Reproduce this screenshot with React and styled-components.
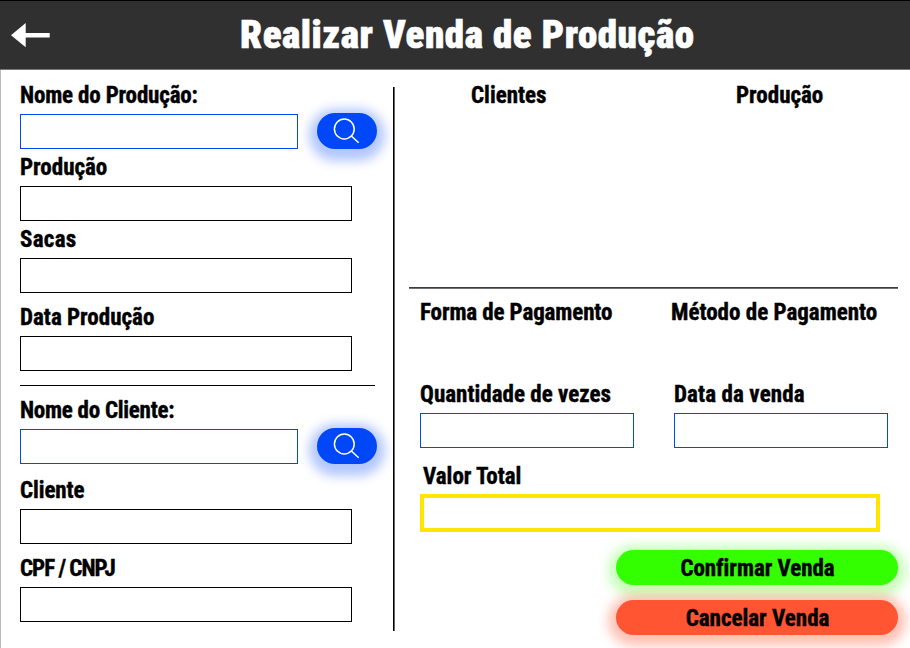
import React from 'react';
import styled, { createGlobalStyle } from 'styled-components';

const GlobalStyle = createGlobalStyle`
  *, *::before, *::after { box-sizing: border-box; }
  body { margin: 0; background: #fff; overflow: hidden; }
`;

const Screen = styled.div`
  width: 910px;
  height: 648px;
  display: flex;
  flex-direction: column;
  background: #fff;
  color: #000;
  font-family: 'Roboto Condensed', Roboto, sans-serif;
`;

const Header = styled.header`
  height: 70px;
  flex: none;
  display: grid;
  grid-template-columns: 240px 1fr;
  align-items: center;
  background: #303030;
  border-top: 1px solid #000;
  border-bottom: 1px solid #777;
`;

const BackButton = styled.button`
  width: 39px;
  height: 25px;
  margin: 0 0 0 11px;
  padding: 0;
  border: 0;
  background: none;
  svg { display: block; }
`;

const Title = styled.h1`
  margin: 0;
  color: #fff;
  font-size: 39px;
  line-height: 46px;
  font-weight: 900;
  letter-spacing: 0.55px;
  -webkit-text-stroke: 0.6px currentColor;
  white-space: nowrap;
`;

const Main = styled.main`
  flex: 1;
  display: grid;
  grid-template-columns: 392px 2px 1fr;
  border-left: 1px solid #bbb;
`;

const LeftColumn = styled.section`
  padding: 14px 0 0 19px;
`;

const Divider = styled.div`
  height: 544px;
  margin-top: 17px;
  background: linear-gradient(to right, #000 50%, #666 50%);
`;

const RightColumn = styled.section`
  padding: 14px 0 0 14px;
`;

const Field = styled.div`
  width: ${p => p.$width || 332}px;
  margin-top: ${p => p.$top || 0}px;
`;

const Label = styled.label`
  display: block;
  height: 24px;
  line-height: 24px;
  margin: 0 0 ${p => p.$gap ?? 6}px ${p => p.$indent || 0}px;
  font-size: 23px;
  font-weight: 700;
  letter-spacing: ${p => p.$spacing || 0}px;
  -webkit-text-stroke: 0.4px currentColor;
  white-space: nowrap;
`;

const Input = styled.input`
  display: block;
  width: 100%;
  height: 35px;
  padding: 0 8px;
  font: inherit;
  font-size: 20px;
  background: #fff;
  border: 1px solid ${p => (p.$blue ? '#0047f5' : '#000')};
  border-radius: 0;
  outline: none;
`;

const TotalInput = styled(Input)`
  height: 38px;
  border: 4px solid #ffe600;
`;

const SearchRow = styled.div`
  display: grid;
  grid-template-columns: 278px 60px;
  column-gap: 19px;
  height: 35px;
`;

const SearchButton = styled.button`
  width: 60px;
  height: 36px;
  margin-top: -1px;
  padding: 0;
  display: flex;
  border: 0;
  border-radius: 18px;
  background: #0047f8;
  box-shadow: 0 4px 11px 8px rgba(0, 71, 248, 0.3);
`;

const Rule = styled.hr`
  width: 355px;
  height: 1px;
  margin: 14px 0 13px;
  border: 0;
  background: #000;
`;

const WideRule = styled.hr`
  width: 489px;
  height: 2px;
  margin: 0;
  border: 0;
  background: linear-gradient(#3c3c3c 50%, #707070 50%);
`;

const Lists = styled.div`
  height: 203px;
  display: grid;
  grid-template-columns: 265px 1fr;
  padding-left: 62px;
`;

const Payment = styled.div`
  display: grid;
  grid-template-columns: 214px 214px;
  column-gap: 40px;
  padding: 12px 0 0 11px;
`;

const Total = styled.div`
  padding-left: 11px;
`;

const Actions = styled.div`
  display: grid;
  row-gap: 15px;
  width: 282px;
  margin: 18px 0 0 207px;
`;

const ActionButton = styled.button`
  height: 35px;
  padding: 2px 0 0 1px;
  border: 0;
  border-radius: 18px;
  background: ${p => p.$color};
  box-shadow: 0 3px 11px 8px ${p => p.$glow};
  color: #000;
  font: 700 23px/33px 'Roboto Condensed', Roboto, sans-serif;
  letter-spacing: ${p => p.$spacing || 0}px;
  -webkit-text-stroke: 0.4px currentColor;
`;

function SearchIcon() {
  return (
    <svg width="60" height="36" viewBox="0 0 60 36" fill="none" stroke="#fff" strokeWidth="1.5">
      <circle cx="27.3" cy="16" r="9.9" />
      <path d="M34.3 23 41.7 29.8" />
    </svg>
  );
}

function Search() {
  return (
    <SearchRow>
      <Input $blue />
      <SearchButton aria-label="Buscar"><SearchIcon /></SearchButton>
    </SearchRow>
  );
}

export default function App() {
  return (
    <>
      <GlobalStyle />
      <Screen>
        <Header>
          <BackButton aria-label="Voltar">
            <svg width="39" height="25" viewBox="0 0 39 25" fill="#fff">
              <path d="M0 12.3 14.7 0V10H38.7V14.6H14.7V24.3Z" />
            </svg>
          </BackButton>
          <Title>Realizar Venda de Produção</Title>
        </Header>
        <Main>
          <LeftColumn>
            <Field>
              <Label $spacing={-0.17}>Nome do Produção:</Label>
              <Search />
            </Field>
            <Field $top={7}><Label>Produção</Label><Input /></Field>
            <Field $top={7}><Label $spacing={0.3}>Sacas</Label><Input /></Field>
            <Field $top={13}><Label>Data Produção</Label><Input /></Field>
            <Rule />
            <Field><Label $spacing={-0.26}>Nome do Cliente:</Label><Search /></Field>
            <Field $top={15}><Label $spacing={-0.1}>Cliente</Label><Input /></Field>
            <Field $top={13}><Label $spacing={-1}>CPF / CNPJ</Label><Input /></Field>
          </LeftColumn>
          <Divider />
          <RightColumn>
            <Lists>
              <Label as="h2">Clientes</Label>
              <Label as="h2">Produção</Label>
            </Lists>
            <WideRule />
            <Payment>
              <Label $gap={58} $spacing={-0.12}>Forma de Pagamento</Label>
              <Label $indent={-3}>Método de Pagamento</Label>
              <Field $width={214}><Label $spacing={0.02}>Quantidade de vezes</Label><Input $blue /></Field>
              <Field $width={214}><Label $spacing={0.1}>Data da venda</Label><Input $blue /></Field>
            </Payment>
            <Total>
              <Field $width={460} $top={17}><Label $gap={5} $indent={3}>Valor Total</Label><TotalInput /></Field>
            </Total>
            <Actions>
              <ActionButton $color="#33ff00" $glow="rgba(51, 255, 0, 0.27)" $spacing={-0.05}>Confirmar Venda</ActionButton>
              <ActionButton $color="#ff5533" $glow="rgba(255, 85, 51, 0.36)">Cancelar Venda</ActionButton>
            </Actions>
          </RightColumn>
        </Main>
      </Screen>
    </>
  );
}
